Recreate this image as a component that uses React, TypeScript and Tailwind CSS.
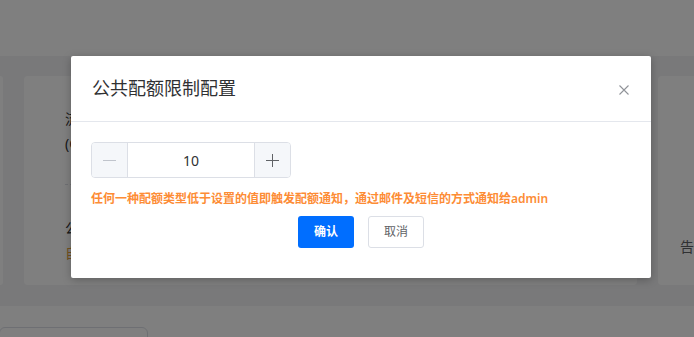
import React, { useState } from "react";

const font = { fontFamily: '"Noto Sans", "Noto Sans CJK SC", sans-serif' };

const Stepper: React.FC<{ value: number; onChange: (v: number) => void }> = ({ value, onChange }) => (
    <div className="flex h-[36px] w-[200px] rounded-[4px] border border-[#dcdfe6] overflow-hidden">
        <button
            className="w-[36px] shrink-0 bg-[#f5f7fa] border-r border-[#dcdfe6] flex items-center justify-center"
            onClick={() => onChange(value - 1)}
        >
            <span className="block w-[13px] h-px bg-[#c0c4cc]" />
        </button>
        <div className="flex-1 flex items-center justify-center text-[14px] text-[#303133]">{value}</div>
        <button
            className="w-[36px] shrink-0 bg-[#f5f7fa] border-l border-[#dcdfe6] flex items-center justify-center relative"
            onClick={() => onChange(value + 1)}
        >
            <svg width="13" height="13" viewBox="0 0 13 13">
                <path d="M6.5 0v13M0 6.5h13" stroke="#606266" strokeWidth="1" />
            </svg>
        </button>
    </div>
);

export default function App() {
    const [limit, setLimit] = useState(10);

    return (
        <div className="relative h-[337px] w-[694px] overflow-hidden bg-white" style={font}>
            {/* Page behind the dialog */}
            <div className="h-[56px] bg-white" />
            <div className="flex gap-[21px] bg-[#f2f3f5] pt-[20px] pb-[21px]">
                <div className="w-[3px] h-[209px] shrink-0 rounded-r-[4px] bg-white" />
                <div className="w-[613px] h-[209px] shrink-0 rounded-[4px] bg-white pl-[41px] pt-[32px] text-[14px]">
                    <p className="text-[#303133]">流量配额告警阈值</p>
                    <p className="mt-[4px] text-[#303133]">(GB)</p>
                    <div className="mt-[30px] w-[560px] border-t border-dashed border-[#dcdfe6]" />
                    <p className="mt-[32px] text-[#303133]">公共配额限制</p>
                    <p className="mt-[4px] text-[#e6a23c]">自定义</p>
                </div>
                <div className="w-[200px] h-[209px] shrink-0 rounded-[4px] bg-white pl-[22px] pt-[160px] text-[14px] text-[#606266]">
                    告警
                </div>
            </div>
            <div className="bg-white pt-[21px]">
                <div className="w-[149px] h-[20px] rounded-t-[6px] border border-[#dcdfe6] -ml-px" />
            </div>

            {/* Dialog */}
            <div className="absolute inset-0 bg-black/50">
                <div className="ml-[71px] mt-[56px] w-[580px] rounded-[2px] bg-white shadow-[0_2px_8px_rgba(0,0,0,0.25)]">
                    <div className="flex h-[66px] items-center justify-between border-b border-[#e4e7ed] pl-[21px] pr-[22px]">
                        <h2 className="text-[18px] text-[#303133]">公共配额限制配置</h2>
                        <svg width="10" height="10" viewBox="0 0 10 10" className="mt-[2px]">
                            <path d="M0.5 0.5l9 9M9.5 0.5l-9 9" stroke="#909399" strokeWidth="1.1" />
                        </svg>
                    </div>
                    <div className="px-[20px] pt-[20px] pb-[30px]">
                        <Stepper value={limit} onChange={setLimit} />
                        <p className="mt-[12px] text-[12px] leading-[18px] font-semibold text-[#fd8c35]">
                            任何一种配额类型低于设置的值即触发配额通知，通过邮件及短信的方式通知给admin
                        </p>
                        <div className="mt-[8px] flex justify-center gap-[14px]">
                            <button className="h-[32px] w-[56px] rounded-[3px] bg-[#006eff] text-[12px] font-semibold text-white">
                                确认
                            </button>
                            <button className="h-[32px] w-[56px] rounded-[3px] border border-[#dcdfe6] bg-white text-[12px] text-[#606266]">
                                取消
                            </button>
                        </div>
                    </div>
                </div>
            </div>
        </div>
    );
}
